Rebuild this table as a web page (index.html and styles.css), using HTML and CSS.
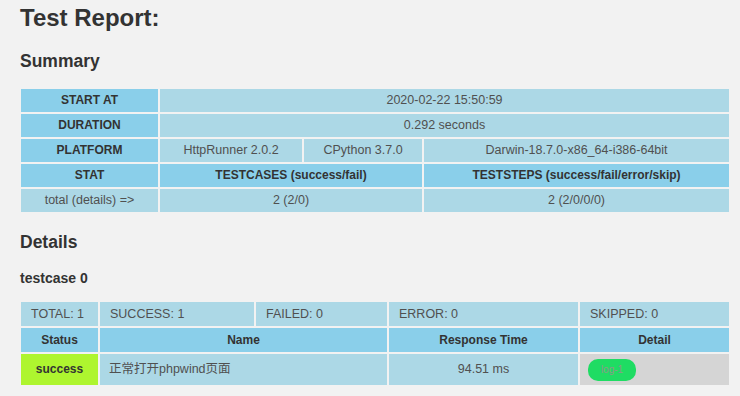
FILE: index.html
```html
<!DOCTYPE html>
<html lang="en">
<head>
<meta charset="utf-8">
<title>Test Report</title>
<link rel="stylesheet" href="styles.css">
</head>
<body>
<h1 class="title">Test Report:</h1>

<h2 class="section">Summary</h2>
<table class="summary">
  <colgroup>
    <col class="s-c1"><col class="s-c2"><col class="s-c3"><col class="s-c4">
  </colgroup>
  <tr>
    <th>START AT</th>
    <td colspan="3">2020-02-22 15:50:59</td>
  </tr>
  <tr>
    <th>DURATION</th>
    <td colspan="3">0.292 seconds</td>
  </tr>
  <tr>
    <th>PLATFORM</th>
    <td>HttpRunner 2.0.2</td>
    <td>CPython 3.7.0</td>
    <td>Darwin-18.7.0-x86_64-i386-64bit</td>
  </tr>
  <tr>
    <th>STAT</th>
    <th colspan="2">TESTCASES (success/fail)</th>
    <th>TESTSTEPS (success/fail/error/skip)</th>
  </tr>
  <tr>
    <td>total (details) =&gt;</td>
    <td colspan="2">2 (2/0)</td>
    <td>2 (2/0/0/0)</td>
  </tr>
</table>

<h2 class="section details-title">Details</h2>
<h3 class="case-title">testcase 0</h3>
<table class="details">
  <colgroup>
    <col class="d-c1"><col class="d-c2"><col class="d-c3"><col class="d-c4"><col class="d-c5">
  </colgroup>
  <tr class="stat-row">
    <td>TOTAL: 1</td>
    <td>SUCCESS: 1</td>
    <td>FAILED: 0</td>
    <td>ERROR: 0</td>
    <td>SKIPPED: 0</td>
  </tr>
  <tr>
    <th>Status</th>
    <th colspan="2">Name</th>
    <th>Response Time</th>
    <th>Detail</th>
  </tr>
  <tr class="record">
    <th class="success">success</th>
    <td colspan="2" class="name">正常打开phpwind页面</td>
    <td class="time">94.51 ms</td>
    <td class="detail"><a class="button">log-1</a></td>
  </tr>
</table>
</body>
</html>
```

FILE: styles.css
```css
html, body {
  background-color: #f2f2f2;
}
body {
  margin: 0;
  padding: 0 19px;
  color: #333;
  font-family: "Liberation Sans", Arial, "Noto Sans CJK SC", sans-serif;
}
.title {
  margin: 4px 0 0 1px;
  font-size: 24px;
  line-height: 28px;
  font-weight: bold;
  color: #333;
}
.section {
  margin: 19px 0 0 1px;
  font-size: 17.5px;
  line-height: 20px;
  font-weight: bold;
  color: #333;
}
.details-title {
  margin-top: 18px;
}
.case-title {
  margin: 18px 0 0 1px;
  font-size: 14px;
  line-height: 16px;
  font-weight: bold;
  color: #333;
}
table {
  table-layout: fixed;
  width: 712px;
  border-spacing: 2px;
  font-size: 12.5px;
}
.summary {
  margin-top: 16px;
}
.s-c1 { width: 137px; }
.s-c2 { width: 142px; }
.s-c3 { width: 118px; }
.s-c4 { width: 305px; }
.summary th, .summary td {
  padding: 0 4px;
  height: 23px;
  line-height: 23px;
  text-align: center;
  white-space: nowrap;
}
th {
  background-color: #8acfea;
  color: #333;
  font-weight: bold;
  font-size: 12px;
}
td {
  background-color: #acd8e6;
  color: #505050;
}
.details {
  margin-top: 14px;
}
.d-c1 { width: 77px; }
.d-c2 { width: 154px; }
.d-c3 { width: 131px; }
.d-c4 { width: 189px; }
.d-c5 { width: 149px; }
.details th, .details td {
  height: 24px;
  line-height: 24px;
  padding: 0 4px;
  white-space: nowrap;
}
.details th {
  text-align: center;
}
.stat-row td {
  padding-left: 10px;
  text-align: left;
}
.record th, .record td {
  height: 31px;
  line-height: 31px;
}
.details .success {
  background-color: #aef52f;
}
.details .name {
  padding-left: 9px;
  text-align: left;
}
.details .time {
  text-align: center;
}
.details .detail {
  background-color: #d5d5d5;
  padding: 0 8px;
  line-height: 0;
  vertical-align: middle;
}
.button {
  display: inline-block;
  width: 48px;
  height: 22px;
  line-height: 22px;
  border-radius: 10px;
  background-color: #1fdc63;
  color: #8a9a8a;
  font-size: 10px;
  text-align: center;
  text-decoration: none;
}
```
